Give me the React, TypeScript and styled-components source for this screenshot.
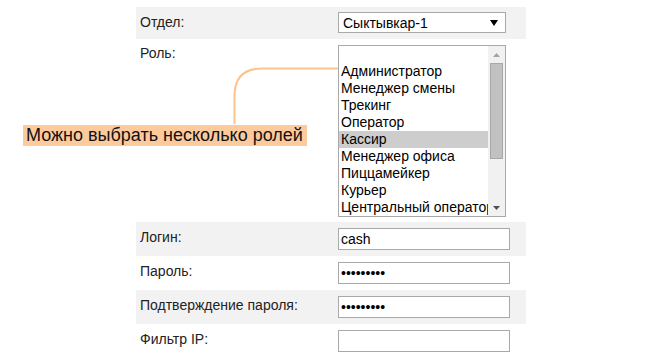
import React from "react";
import styled, { createGlobalStyle } from "styled-components";

const Global = createGlobalStyle`
  html, body { margin: 0; padding: 0; background: #fff; }
  body { font-family: "Liberation Sans", Arial, sans-serif; }
`;

const Page = styled.div`
  position: relative;
  width: 650px;
  height: 359px;
  overflow: hidden;
  padding: 7px 0 0 136px;
  box-sizing: border-box;
`;

const Form = styled.div`
  width: 390px;
  display: flex;
  flex-direction: column;
`;

const Row = styled.div<{ $shaded?: boolean; $pt?: number; $pb?: number }>`
  display: grid;
  grid-template-columns: 202px 1fr;
  align-items: start;
  background: ${(p) => (p.$shaded ? "#f2f2f2" : "transparent")};
  padding: ${(p) => p.$pt ?? 6}px 0 ${(p) => p.$pb ?? 6}px;
`;

const Label = styled.div<{ $top?: number }>`
  padding: ${(p) => p.$top ?? 0}px 0 0 4px;
  font-size: 14px;
  line-height: 16px;
  color: #222;
`;

const SelectBox = styled.div`
  width: 168px;
  height: 21px;
  box-sizing: border-box;
  border: 1px solid #a9a9a9;
  background: #fff;
  display: flex;
  align-items: center;
  justify-content: space-between;
  padding: 0 7px 0 4px;
  font-size: 14px;
  color: #000;
`;

const ListBox = styled.div`
  width: 168px;
  height: 172px;
  box-sizing: border-box;
  border: 1px solid #a9a9a9;
  background: #fff;
  display: flex;
  overflow: hidden;
`;

const Options = styled.div`
  flex: 1;
  min-width: 0;
  display: flex;
  flex-direction: column;
`;

const Option = styled.div<{ $selected?: boolean }>`
  height: 17px;
  line-height: 17px;
  padding: 0 2px;
  font-size: 14px;
  color: #000;
  white-space: nowrap;
  overflow: hidden;
  background: ${(p) => (p.$selected ? "#cdcdcd" : "transparent")};
`;

const Scrollbar = styled.div`
  width: 17px;
  background: #f1f1f1;
  display: flex;
  flex-direction: column;
  align-items: center;
`;

const ArrowBtn = styled.div`
  height: 17px;
  width: 17px;
  display: flex;
  align-items: center;
  justify-content: center;
`;

const Thumb = styled.div`
  width: 13px;
  height: 96px;
  box-sizing: border-box;
  background: #c1c1c1;
  border: 1px solid #a8a8a8;
`;

const Track = styled.div`
  flex: 1;
`;

const TextInput = styled.input`
  width: 172px;
  height: 22px;
  box-sizing: border-box;
  border: 1px solid #a9a9a9;
  padding: 0 2px;
  margin: 0;
  font-family: "Liberation Sans", Arial, sans-serif;
  font-size: 14px;
  color: #000;
  background: #fff;
  outline: none;
  display: block;
`;

const Note = styled.div`
  position: absolute;
  left: 23px;
  top: 125px;
  height: 21px;
  padding: 0 4px 0 3px;
  background: #fdca9e;
  font-size: 18px;
  line-height: 21px;
  color: #111;
  white-space: nowrap;
`;

const Connector = styled.svg`
  position: absolute;
  left: 0;
  top: 0;
  pointer-events: none;
`;

const roles = [
  "",
  "Администратор",
  "Менеджер смены",
  "Трекинг",
  "Оператор",
  "Кассир",
  "Менеджер офиса",
  "Пиццамейкер",
  "Курьер",
  "Центральный оператор",
];

export default function App() {
  return (
    <>
      <Global />
      <Page>
        <Form>
          <Row $shaded $pt={5} $pb={6}>
            <Label $top={2}>Отдел:</Label>
            <SelectBox>
              <span>Сыктывкар-1</span>
              <svg width="8" height="6" viewBox="0 0 8 6">
                <path d="M0 0 H8 L4 6 Z" fill="#000" />
              </svg>
            </SelectBox>
          </Row>
          <Row $pt={6} $pb={5}>
            <Label $top={0}>Роль:</Label>
            <ListBox>
              <Options>
                {roles.map((r, i) => (
                  <Option key={i} $selected={r === "Кассир"}>
                    {r || "\u00a0"}
                  </Option>
                ))}
              </Options>
              <Scrollbar>
                <ArrowBtn>
                  <svg width="7" height="4" viewBox="0 0 7 4">
                    <path d="M0 4 L3.5 0 L7 4 Z" fill="#a3a3a3" />
                  </svg>
                </ArrowBtn>
                <Thumb />
                <Track />
                <ArrowBtn>
                  <svg width="7" height="4" viewBox="0 0 7 4">
                    <path d="M0 0 L7 0 L3.5 4 Z" fill="#505050" />
                  </svg>
                </ArrowBtn>
              </Scrollbar>
            </ListBox>
          </Row>
          <Row $shaded>
            <Label $top={1}>Логин:</Label>
            <TextInput type="text" defaultValue="cash" readOnly />
          </Row>
          <Row>
            <Label $top={1}>Пароль:</Label>
            <TextInput type="password" defaultValue="123456789" readOnly />
          </Row>
          <Row $shaded>
            <Label $top={1}>Подтверждение пароля:</Label>
            <TextInput type="password" defaultValue="123456789" readOnly />
          </Row>
          <Row>
            <Label $top={1}>Фильтр IP:</Label>
            <TextInput type="text" defaultValue="" readOnly />
          </Row>
        </Form>
        <Connector width="650" height="359" viewBox="0 0 650 359">
          <path
            d="M234.5 124 V96 Q234.5 68.5 262 68.5 H338"
            fill="none"
            stroke="#fdc38e"
            strokeWidth="2"
          />
        </Connector>
        <Note>Можно выбрать несколько ролей</Note>
      </Page>
    </>
  );
}
